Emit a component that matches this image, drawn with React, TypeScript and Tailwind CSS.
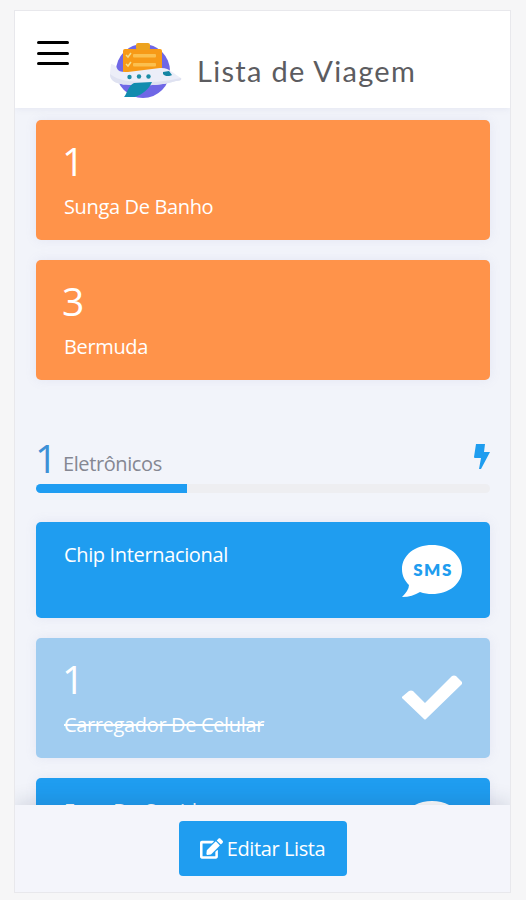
import type { ReactNode } from "react";
import clsx from "clsx";
import { FaEdit } from "react-icons/fa";

function PlaneLogo() {
	return (
		<svg width="76" height="60" viewBox="0 0 76 60" className="shrink-0">
			<circle cx="34" cy="30" r="27" fill="#6f67e6" />
			<rect x="14" y="8" width="39" height="34" rx="2" fill="#f79a17" />
			<rect x="27" y="2" width="14" height="7" rx="2" fill="#eda31f" />
			<g fill="#fbc04f">
				<rect x="24" y="13" width="23" height="3.500" rx="1" />
				<rect x="24" y="22" width="23" height="3.500" rx="1" />
			</g>
			<g fill="none" stroke="#f3df8d" strokeWidth="1.500">
				<path d="M17 14l2 2 3-4M17 23l2 2 3-4" />
			</g>
			<path
				d="M2 23c3 0 5 2 7 6 2 2 6 2 10 2l32-4c9-1 14 6 21 10 1 2-1 3-5 3-12 4-28 5-41 4C8 44 1 41 1 32z"
				fill="#eceef8"
			/>
			<path d="M1 33c8 7 22 8 38 8 13 0 23-2 33-4 1 2-1 3-5 3-12 4-28 5-41 4C8 44 1 41 1 33z" fill="#dfe2f1" />
			<path d="M25 42l18-1c-3 7-9 12-17 15H15c3-3 4-11 10-14z" fill="#128cae" />
			<path d="M54 31l6-1 3 4c-3 2-8 1-9-1z" fill="#1586a3" />
			<g fill="#1b8da6">
				<circle cx="20.500" cy="36" r="2.200" />
				<circle cx="30" cy="35.500" r="2.200" />
				<circle cx="39.500" cy="35.500" r="2.200" />
			</g>
		</svg>
	);
}

function SmsIcon() {
	return (
		<svg width="60" height="52" viewBox="0 0 60 52">
			<path
				d="M30 0C47 0 60 10 60 24.500S47 49 30 49c-4 0-8-.6-12-2C13 50 7 52 0 52c4-4 7-8 7-12-4-4-7-9-7-15.500C0 10 13 0 30 0z"
				fill="#fff"
			/>
			<text
				x="31"
				y="30.500"
				textAnchor="middle"
				fill="#1f9def"
				className="font-['Lato'] text-[17px] font-extrabold tracking-[1.500px]"
			>
				SMS
			</text>
		</svg>
	);
}

function CheckIcon() {
	return (
		<svg width="60" height="46" viewBox="0 0 60 46">
			<path
				d="M1 21l6-5q2-1 4 0l12 12L50 1q2-1 4 0l6 6q1 1 0 2L24 44q-1 1-2 0L0 23q-.500-1 1-2z"
				fill="#fff"
			/>
		</svg>
	);
}

function BoltIcon() {
	return (
		<svg width="16" height="26" viewBox="0 0 16 26">
			<path d="M2 0h9L10 8h6L7 25H5l2-11H1q-1 0-1-1z" fill="#1f9def" />
		</svg>
	);
}

interface ItemCardProps {
	name: string;
	count?: number;
	color: string;
	icon?: ReactNode;
	done?: boolean;
}

function ItemCard({ name, count, color, icon, done }: ItemCardProps) {
	return (
		<div
			className={clsx(
				"flex shrink-0 justify-between rounded-[5px] pr-7 pl-[28px] text-white shadow-[0_0_12px_rgba(130,140,200,0.12)]",
				count === undefined ? "h-24 pt-5" : "h-[120px] pt-[21px]",
				color,
			)}
		>
			<div>
				{count !== undefined && (
					<div className="mb-[13px] -ml-[2px] h-10 text-[39px] leading-10 font-normal tracking-tight">{count}</div>
				)}
				<div
					className={clsx(
						"text-[20px] leading-[26px] tracking-[-0.350px]",
						done && "line-through",
					)}
				>
					{name}
				</div>
			</div>
			{icon && <div className={done ? "pt-[16px]" : "pt-[3px]"}>{icon}</div>}
		</div>
	);
}

export default function App() {
	return (
		<div className="h-[900px] overflow-hidden bg-[#f6f6f7] pt-[10px] pl-[14px] font-['Open_Sans',sans-serif]">
			<div className="flex h-[883px] w-[497px] flex-col overflow-hidden border border-[#e8e8ec] bg-[#f2f4fa]">
				<header className="flex h-[97px] shrink-0 bg-white pl-[22px] shadow-[0_1px_6px_rgba(130,140,180,0.12)]">
					<div className="mt-[30px] flex h-[24px] w-8 flex-col justify-between">
						<span className="h-[3px] rounded-full bg-black" />
						<span className="h-[3px] rounded-full bg-black" />
						<span className="h-[3px] rounded-full bg-black" />
					</div>
					<div className="mt-[30px] ml-10">
						<PlaneLogo />
					</div>
					<h1 className="mt-[42px] ml-3 font-['Lato',sans-serif] text-[29px] leading-9 font-normal tracking-[1.300px] whitespace-nowrap text-[#5c5c60]">
						Lista de Viagem
					</h1>
				</header>

				<main className="flex min-h-0 flex-1 flex-col overflow-hidden px-5 pt-3">
					<div className="flex shrink-0 flex-col gap-5 pl-px">
						<ItemCard name="Sunga De Banho" count={1} color="bg-[#ff934a]" />
						<ItemCard name="Bermuda" count={3} color="bg-[#ff934a]" />
					</div>

					<section className="mt-[58px] shrink-0 pl-px">
						<div className="flex h-[46px] justify-between">
							<div className="flex">
								<span className="-ml-px w-[28px] text-[39px] leading-10 font-normal text-[#3d90d6]">1</span>
								<span className="pt-[13px] text-[20px] leading-[26px] tracking-[-0.400px] text-[#858792]">
									Eletrônicos
								</span>
							</div>
							<div className="pt-[6px]">
								<BoltIcon />
							</div>
						</div>
						<div className="h-[9px] overflow-hidden rounded-full bg-[#eeeef1]">
							<div className="h-full w-1/3 bg-[#1f9df2]" />
						</div>
					</section>

					<div className="mt-[29px] flex shrink-0 flex-col gap-5 pl-px">
						<ItemCard name="Chip Internacional" color="bg-[#1f9df0]" icon={<SmsIcon />} />
						<ItemCard name="Carregador De Celular" count={1} color="bg-[#a0ccf0]" icon={<CheckIcon />} done />
						<ItemCard name="Fone De Ouvido" color="bg-[#1f9df0]" icon={<SmsIcon />} />
					</div>
				</main>

				<footer className="z-10 flex h-[87px] shrink-0 justify-center bg-[#f4f5fb] pt-4 shadow-[0_-4px_18px_rgba(30,40,80,0.14)]">
					<button className="flex h-[55px] w-[168px] items-center justify-center gap-1 rounded-[4px] bg-[#1f9df0] text-[20px] tracking-[-0.400px] text-white">
						<FaEdit size={23} />
						Editar Lista
					</button>
				</footer>
			</div>
		</div>
	);
}
